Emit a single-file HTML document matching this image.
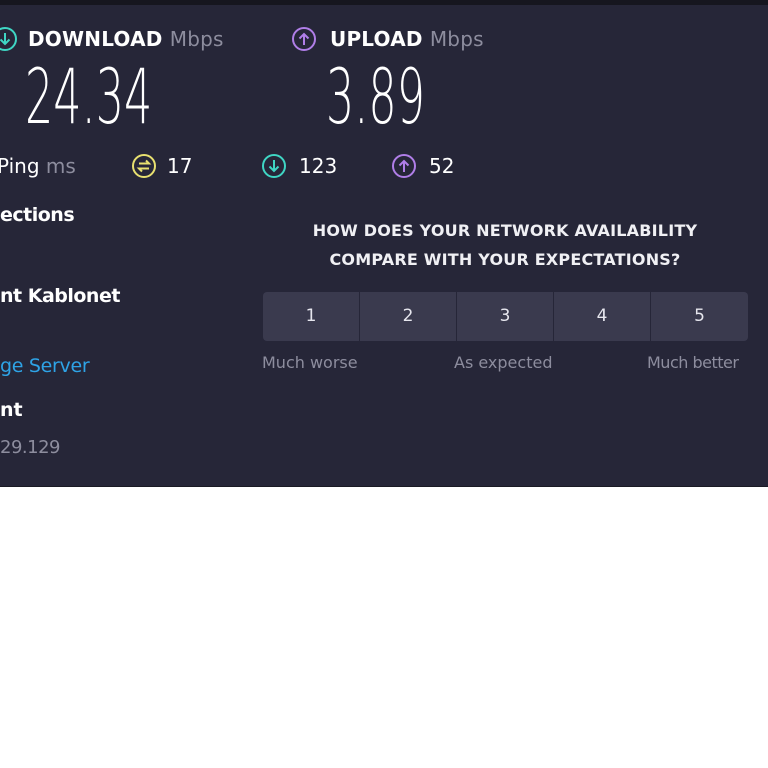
<!DOCTYPE html>
<html><head><style>
html,body{margin:0;padding:0;width:768px;height:768px;background:#fff;overflow:hidden;font-family:"DejaVu Sans","Liberation Sans",sans-serif}
.panel{position:absolute;left:0;top:0;width:768px;height:486px;background:#262638;border-bottom:1px solid #1a1a24}
.top{position:absolute;left:0;top:0;width:768px;height:5px;background:#16161f}
.t{position:absolute;white-space:nowrap;color:#fff}
.big{position:absolute;font-family:"DejaVu Sans",sans-serif;font-size:76px;font-weight:200;color:#fff;transform:scaleX(0.585);transform-origin:left top;line-height:80px}
.g{color:#8d8d9e;font-weight:normal}
.btn{position:absolute;top:292px;height:49px;width:96px;background:#3a3a4e;color:#e6e6ee;font-size:17px;text-align:center;line-height:49px}
svg{position:absolute}
</style></head><body>
<div class="panel">
<div class="top"></div>
<svg style="left:-8px;top:26px" width="26" height="26" viewBox="0 0 26 26"><circle cx="13" cy="13" r="11" fill="none" stroke="#3fd6c4" stroke-width="2"/><path d="M13 7v11M8.5 13.5l4.5 4.5 4.5-4.5" fill="none" stroke="#3fd6c4" stroke-width="2"/></svg>
<div class="t" style="left:28px;top:27px;font-size:20px;font-weight:bold;letter-spacing:0.2px">DOWNLOAD <span class="g">Mbps</span></div>
<div class="big" style="left:25px;top:57px">24.34</div>
<svg style="left:291px;top:26px" width="26" height="26" viewBox="0 0 26 26"><circle cx="13" cy="13" r="11" fill="none" stroke="#b07ee8" stroke-width="2"/><path d="M13 19V8M8.5 12.5L13 8l4.5 4.5" fill="none" stroke="#b07ee8" stroke-width="2"/></svg>
<div class="t" style="left:330px;top:27px;font-size:20px;font-weight:bold;letter-spacing:0.2px">UPLOAD <span class="g">Mbps</span></div>
<div class="big" style="left:326px;top:57px">3.89</div>
<div class="t" style="left:-3px;top:154px;font-size:20px">Ping <span class="g">ms</span></div>
<svg style="left:131px;top:153px" width="26" height="26" viewBox="0 0 26 26"><circle cx="13" cy="13" r="11" fill="none" stroke="#e8e070" stroke-width="2"/><path d="M8 10.5h10l-3-3M18 15.5H8l3 3" fill="none" stroke="#e8e070" stroke-width="2"/></svg>
<div class="t" style="left:167px;top:154px;font-size:20px">17</div>
<svg style="left:261px;top:153px" width="26" height="26" viewBox="0 0 26 26"><circle cx="13" cy="13" r="11" fill="none" stroke="#3fd6c4" stroke-width="2"/><path d="M13 7v11M8.5 13.5l4.5 4.5 4.5-4.5" fill="none" stroke="#3fd6c4" stroke-width="2"/></svg>
<div class="t" style="left:299px;top:154px;font-size:20px">123</div>
<svg style="left:391px;top:153px" width="26" height="26" viewBox="0 0 26 26"><circle cx="13" cy="13" r="11" fill="none" stroke="#b07ee8" stroke-width="2"/><path d="M13 19V8M8.5 12.5L13 8l4.5 4.5" fill="none" stroke="#b07ee8" stroke-width="2"/></svg>
<div class="t" style="left:429px;top:154px;font-size:20px">52</div>
<div class="t" style="left:0;top:204px;font-size:19px;font-weight:bold;letter-spacing:-0.5px">ections</div>
<div class="t" style="left:0;top:285px;font-size:19px;font-weight:bold;letter-spacing:-0.5px">nt Kablonet</div>
<div class="t" style="left:0;top:355px;font-size:19px;color:#2ea3e6;letter-spacing:-0.3px">ge Server</div>
<div class="t" style="left:0;top:399px;font-size:19px;font-weight:bold">nt</div>
<div class="t g" style="left:0;top:437px;font-size:18px;letter-spacing:-0.5px">29.129</div>
<div class="t" style="left:262px;width:486px;text-align:center;top:216px;font-size:16px;line-height:29px;font-weight:bold;color:#f0f0f4;letter-spacing:0.2px">HOW DOES YOUR NETWORK AVAILABILITY<br>COMPARE WITH YOUR EXPECTATIONS?</div>
<div class="btn" style="left:263px;border-radius:4px 0 0 4px">1</div>
<div class="btn" style="left:360px">2</div>
<div class="btn" style="left:457px">3</div>
<div class="btn" style="left:554px">4</div>
<div class="btn" style="left:651px;width:97px;border-radius:0 4px 4px 0">5</div>
<div class="t g" style="left:262px;top:353px;font-size:16px">Much worse</div>
<div class="t g" style="left:454px;top:353px;font-size:16px">As expected</div>
<div class="t g" style="left:647px;top:353px;font-size:16px;letter-spacing:-0.5px">Much better</div>
</div>
</body></html>
